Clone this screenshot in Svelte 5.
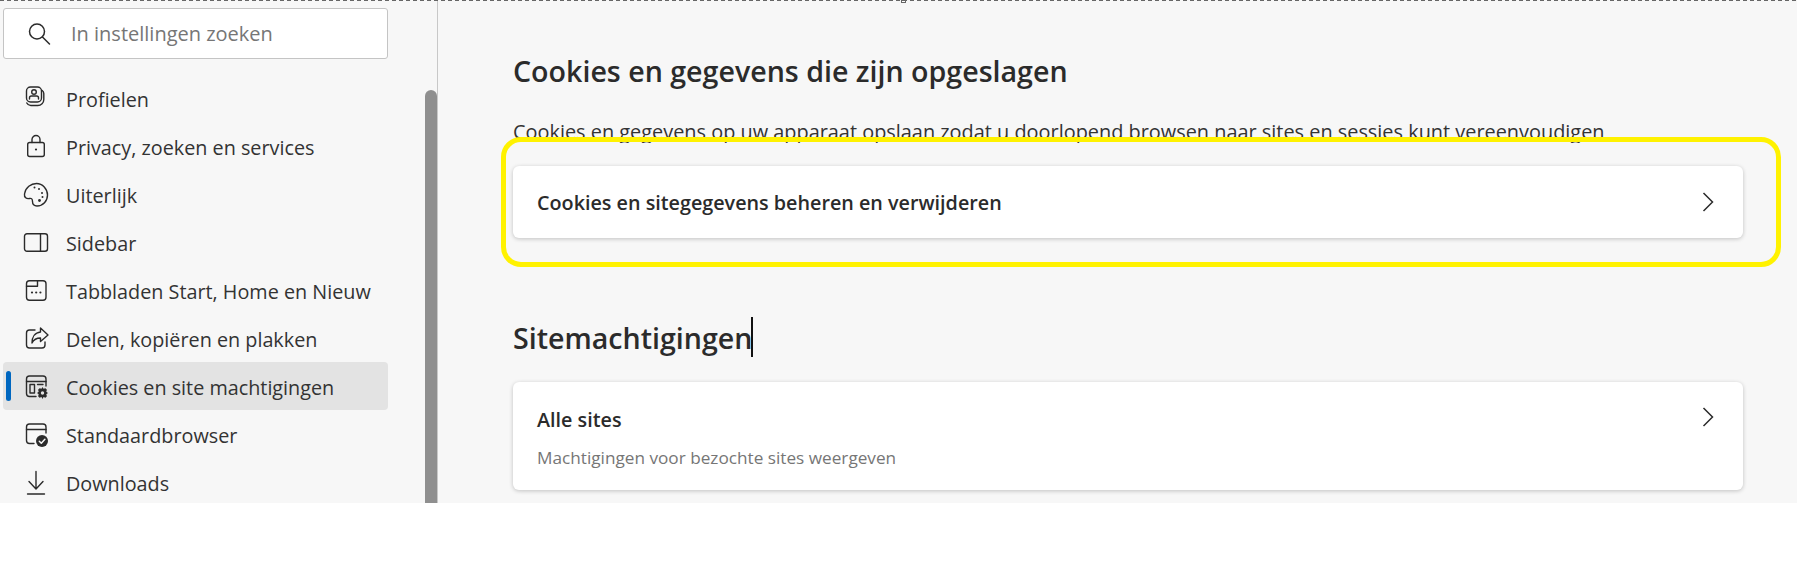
<script lang="ts">
  const items = [
    { id: 'profile', label: 'Profielen' },
    { id: 'lock', label: 'Privacy, zoeken en services' },
    { id: 'palette', label: 'Uiterlijk' },
    { id: 'sidebar', label: 'Sidebar' },
    { id: 'tabs', label: 'Tabbladen Start, Home en Nieuw' },
    { id: 'share', label: 'Delen, kopiëren en plakken' },
    { id: 'cookies', label: 'Cookies en site machtigingen', active: true },
    { id: 'browser', label: 'Standaardbrowser' },
    { id: 'download', label: 'Downloads' }
  ];
</script>

{#snippet icon(id: string)}
  <svg class="icon" viewBox="0 0 26 26" fill="none" stroke="#2b2b2b" stroke-width="1.4" stroke-linecap="round" stroke-linejoin="round">
    {#if id === 'profile'}
      <rect x="3.5" y="1" width="15" height="15" rx="4" />
      <circle cx="11" cy="6" r="2.3" />
      <path d="M6.5 13v-1.2a1.8 1.8 0 0 1 1.8-1.8h5.4a1.8 1.8 0 0 1 1.8 1.8V13" />
      <path d="M3.8 17a4.5 4.5 0 0 0 4 2.5h7a6 6 0 0 0 6-6v-6a4 4 0 0 0-1.6-3" />
    {:else if id === 'lock'}
      <rect x="4.7" y="8.5" width="16.6" height="14" rx="2" />
      <path d="M9 8.5V5.5a4 4 0 0 1 8 0v3" />
      <circle cx="13" cy="15.5" r="1.1" fill="#2b2b2b" stroke="none" />
    {:else if id === 'palette'}
      <path d="M1.5 12C2.5 5.5 8 1.5 13.5 1.5 19.5 1.5 24.5 7 24.5 13c0 6-4.5 11-10.500 11-3 0-4.500-1.500-4.500-4.500 0-2.500-1-3.500-3-3-3 .7-5.500-1-5-4.500z" />
      <circle cx="11.5" cy="5.5" r="1" fill="#2b2b2b" stroke="none" />
      <circle cx="16" cy="7" r="1" fill="#2b2b2b" stroke="none" />
      <circle cx="19" cy="11" r="1" fill="#2b2b2b" stroke="none" />
      <circle cx="19.5" cy="15" r="1" fill="#2b2b2b" stroke="none" />
      <circle cx="16.5" cy="18.5" r="1.4" fill="#2b2b2b" stroke="none" />
    {:else if id === 'sidebar'}
      <rect x="1.5" y="3.7" width="23" height="17.6" rx="2.5" />
      <path d="M17.5 3.700v17.600" />
    {:else if id === 'tabs'}
      <rect x="3.5" y="2.7" width="19.5" height="19.5" rx="3" />
      <path d="M3.500 8.200h11V2.700" />
      <circle cx="9" cy="14.5" r="1.1" fill="#2b2b2b" stroke="none" />
      <circle cx="13.2" cy="14.5" r="1.1" fill="#2b2b2b" stroke="none" />
      <circle cx="17.4" cy="14.5" r="1.1" fill="#2b2b2b" stroke="none" />
    {:else if id === 'share'}
      <path d="M12 4H6.500a3 3 0 0 0-3 3v12a3 3 0 0 0 3 3H19a3 3 0 0 0 3-3v-3" />
      <path d="M17.500 2l7.500 7-7.500 6.500V12C13.500 12 10.500 14 9 17c0-6 3-10.500 8.500-11z" />
    {:else if id === 'cookies'}
      <path d="M13 22.500H6.500a3 3 0 0 1-3-3V5a3 3 0 0 1 3-3H20a3 3 0 0 1 3 3v7" />
      <path d="M3.500 7.500H23" />
      <rect x="7" y="10.5" width="4.5" height="8.5" />
      <path d="M14.500 10.500H20" />
      <path d="M19.500 13l1 1.800 2-.5 1.400 1.400-.6 2 1.700 1.300-1.700 1.300.6 2-1.400 1.400-2-.6-1 1.800-1-1.800-2 .6-1.400-1.400.6-2-1.700-1.300 1.700-1.300-.6-2 1.400-1.400 2 .5z" fill="#2b2b2b" stroke="none" />
      <circle cx="19.5" cy="19" r="1.7" fill="#e3e3e3" stroke="none" />
    {:else if id === 'browser'}
      <path d="M11 21.500H6.500a3 3 0 0 1-3-3V5a3 3 0 0 1 3-3H20a3 3 0 0 1 3 3v6" />
      <path d="M3.500 7.500H23" />
      <circle cx="19" cy="19" r="6" fill="#2b2b2b" stroke="none" />
      <path d="M16.300 19.200l2 2 3.600-4" stroke="#f7f7f7" stroke-width="1.5" />
    {:else}
      <path d="M13 1.500v17M6 11.500l7 7.500 7-7.500" />
      <path d="M4.500 24h17" />
    {/if}
  </svg>
{/snippet}

{#snippet chevron()}
  <svg class="chevron" viewBox="0 0 12 20" fill="none" stroke="#2b2b2b" stroke-width="1.5">
    <path d="M1.500 1l9 9-9 9" />
  </svg>
{/snippet}

<div class="page">
  <aside class="sidebar">
    <div class="panel">
      <div class="search">
        <svg class="search-icon" viewBox="0 0 24 24" fill="none" stroke="#2b2b2b" stroke-width="1.5" stroke-linecap="round">
          <circle cx="10" cy="9.5" r="7.5" />
          <path d="M15.500 15l7 7" />
        </svg>
        <span>In instellingen zoeken</span>
      </div>
      <nav>
        {#each items as item}
          <div class="item" class:active={item.active}>
            {@render icon(item.id)}
            <span>{item.label}</span>
          </div>
        {/each}
      </nav>
    </div>
    <div class="track"><div class="thumb"></div></div>
  </aside>

  <main>
    <h2 class="first">Cookies en gegevens die zijn opgeslagen</h2>
    <div class="clip">
      <p>Cookies en gegevens op uw apparaat opslaan zodat u doorlopend browsen naar sites en sessies kunt vereenvoudigen</p>
    </div>
    <div class="card single">
      <strong>Cookies en sitegegevens beheren en verwijderen</strong>
      {@render chevron()}
    </div>
    <h2 class="second"><span class="caret">Sitemachtigingen</span></h2>
    <div class="card double">
      <div class="card-text">
        <strong>Alle sites</strong>
        <small>Machtigingen voor bezochte sites weergeven</small>
      </div>
      {@render chevron()}
    </div>
    <div class="highlight"></div>
  </main>

  <div class="dashes"></div>
  <div class="handle"></div>
</div>

<style>
  :global(body) {
    background: #fff;
    overflow: hidden;
  }
  .page {
    position: relative;
    display: flex;
    height: 503px;
    width: 1797px;
    overflow: hidden;
    background: #f7f7f7;
    color: #2b2b2b;
    font-family: "Open Sans", "Noto Sans", sans-serif;
  }
  .dashes {
    position: absolute;
    top: 0;
    left: 0;
    right: 0;
    height: 1px;
    background: repeating-linear-gradient(90deg, #666 0 4px, transparent 4px 7px);
  }
  .handle {
    position: absolute;
    top: 0;
    left: 901px;
    width: 5px;
    height: 3px;
    box-sizing: border-box;
    border: 1px solid #666;
    background: #fff;
  }
  .sidebar {
    width: 438px;
    flex: none;
    display: flex;
    justify-content: space-between;
    border-right: 1px solid #c8c8c8;
    box-sizing: border-box;
  }
  .panel {
    width: 385px;
    margin-left: 3px;
    padding-top: 8px;
  }
  .search {
    height: 51px;
    box-sizing: border-box;
    background: #fff;
    border: 1px solid #c4c4c4;
    border-radius: 3px;
    display: flex;
    align-items: center;
    padding-left: 23px;
    gap: 20px;
    font-size: 20px;
    color: #767676;
  }
  .search-icon {
    width: 24px;
    height: 24px;
    flex: none;
  }
  nav {
    margin-top: 16px;
  }
  .item {
    position: relative;
    height: 48px;
    box-sizing: border-box;
    display: flex;
    align-items: center;
    gap: 17px;
    padding-left: 20px;
    font-size: 19.8px;
    border-radius: 4px;
    color: #333;
  }
  .item.active {
    background: #e3e3e3;
    margin: -1px 0 1px;
    padding-top: 2px;
  }
  .item.active::before {
    content: '';
    position: absolute;
    left: 3px;
    top: 9px;
    width: 5px;
    height: 30px;
    border-radius: 3px;
    background: #0067c0;
  }
  .icon {
    width: 26px;
    height: 26px;
    flex: none;
  }
  .track {
    width: 12px;
    padding-top: 90px;
  }
  .thumb {
    height: 420px;
    background: #8f8f8f;
    border-radius: 6px 6px 0 0;
  }
  main {
    position: relative;
    flex: 1;
    min-width: 0;
    padding-left: 75px;
    padding-right: 54px;
  }
  h2 {
    margin: 0;
    font-size: 28.6px;
    line-height: 38px;
    font-weight: 600;
    color: #2b2b2b;
  }
  h2.first {
    padding-top: 52px;
  }
  .clip {
    height: 25px;
    margin-top: 28px;
    overflow: hidden;
  }
  p {
    margin: 0;
    font-size: 19.9px;
    line-height: 28px;
    white-space: nowrap;
    color: #333;
  }
  .card {
    background: #fff;
    border-radius: 6px;
    box-shadow: 0 1px 4px rgba(0, 0, 0, 0.22);
    display: flex;
    justify-content: space-between;
    padding: 0 29px 0 24px;
  }
  .card strong {
    font-size: 19.75px;
    font-weight: 600;
  }
  .single {
    margin-top: 23px;
    height: 72px;
    align-items: center;
  }
  .double {
    height: 108px;
    align-items: flex-start;
  }
  .double .chevron {
    margin-top: 25px;
  }
  .card-text {
    padding-top: 24px;
    display: flex;
    flex-direction: column;
    gap: 13px;
  }
  small {
    font-size: 17.2px;
    color: #767676;
  }
  .chevron {
    width: 12px;
    height: 20px;
    flex: none;
  }
  h2.second {
    margin-top: 81px;
    margin-bottom: 25px;
  }
  .caret {
    position: relative;
    display: inline-block;
  }
  .caret::after {
    content: '';
    position: absolute;
    right: -1px;
    top: -2px;
    width: 2px;
    height: 40px;
    background: #111;
  }
  .highlight {
    position: absolute;
    left: 63px;
    top: 137px;
    width: 1280px;
    height: 130px;
    box-sizing: border-box;
    border: 5px solid #fff200;
    border-radius: 20px;
    pointer-events: none;
  }
</style>
